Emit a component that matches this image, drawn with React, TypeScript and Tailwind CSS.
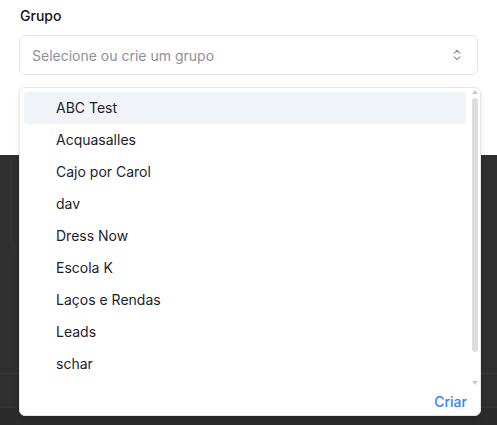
import React from "react";

const items = [
  "ABC Test",
  "Acquasalles",
  "Cajo por Carol",
  "dav",
  "Dress Now",
  "Escola K",
  "Laços e Rendas",
  "Leads",
  "schar",
];

function ChevronsUpDown() {
  return (
    <svg width="14" height="14" viewBox="0 0 24 24" fill="none" stroke="#7a7f88" strokeWidth="1.8" strokeLinecap="round" strokeLinejoin="round">
      <path d="m7 15 5 5 5-5" />
      <path d="m7 9 5-5 5 5" />
    </svg>
  );
}

export default function App() {
  return (
    <div className="relative w-[497px] h-[425px] overflow-hidden bg-[#2f2f2f] font-['Inter','Noto_Sans',sans-serif]">
      <div className="h-[155px] bg-white px-[19px] pt-[6px]">
        <div className="pl-[1px] text-[14px] leading-[20px] font-medium text-[#141414]">Grupo</div>
        <div className="mt-[9px] h-[40px] flex items-center justify-between rounded-md border border-[#e4e6ea] pl-3 pr-[13px]">
          <span className="text-[14px] text-[#8b9099]">Selecione ou crie um grupo</span>
          <ChevronsUpDown />
        </div>
      </div>
      <div className="flex flex-col h-[270px]">
        <div className="ml-[10px] h-[95px] w-[80px] rounded-bl-[10px] border-l border-b border-[#343434]" />
        <div className="mt-[123px] h-[34px] border-t border-[#373737]" />
        <div className="flex-1 bg-[#2b2b2b] border-t border-[#333333]" />
      </div>

      <div className="absolute left-[19px] top-[87px] w-[462px] h-[329px] flex flex-col rounded-md border border-[#e4e6ea] bg-white shadow-md">
        <div className="flex h-[300px]">
          <div className="flex-1 overflow-hidden p-1">
            {items.map((it, i) => (
              <div
                key={it}
                className={
                  i === 0
                    ? "h-[32px] flex items-center rounded-[4px] bg-[#f0f3f8] pl-8 pb-[1px] text-[14px] text-[#1c222b]"
                    : "h-[32px] flex items-center rounded-[4px] pl-8 pb-[1px] text-[14px] text-[#1c222b]"
                }
              >
                {it}
              </div>
            ))}
          </div>
          <div className="w-[10px] flex flex-col items-center pt-[2px] pb-[3px]">
            <div className="w-0 h-0 border-l-[3px] border-r-[3px] border-b-[4px] border-l-transparent border-r-transparent border-b-[#c8c8c8]" />
            <div className="mt-[4px] h-[254px] w-[6px] rounded-full bg-[#dedede]" />
            <div className="mt-auto w-0 h-0 border-l-[3px] border-r-[3px] border-t-[4px] border-l-transparent border-r-transparent border-t-[#c8c8c8]" />
          </div>
        </div>
        <div className="flex-1 flex items-center justify-end pr-[13px]">
          <span className="text-[14px] font-medium text-[#3b82f6]">Criar</span>
        </div>
      </div>
    </div>
  );
}
